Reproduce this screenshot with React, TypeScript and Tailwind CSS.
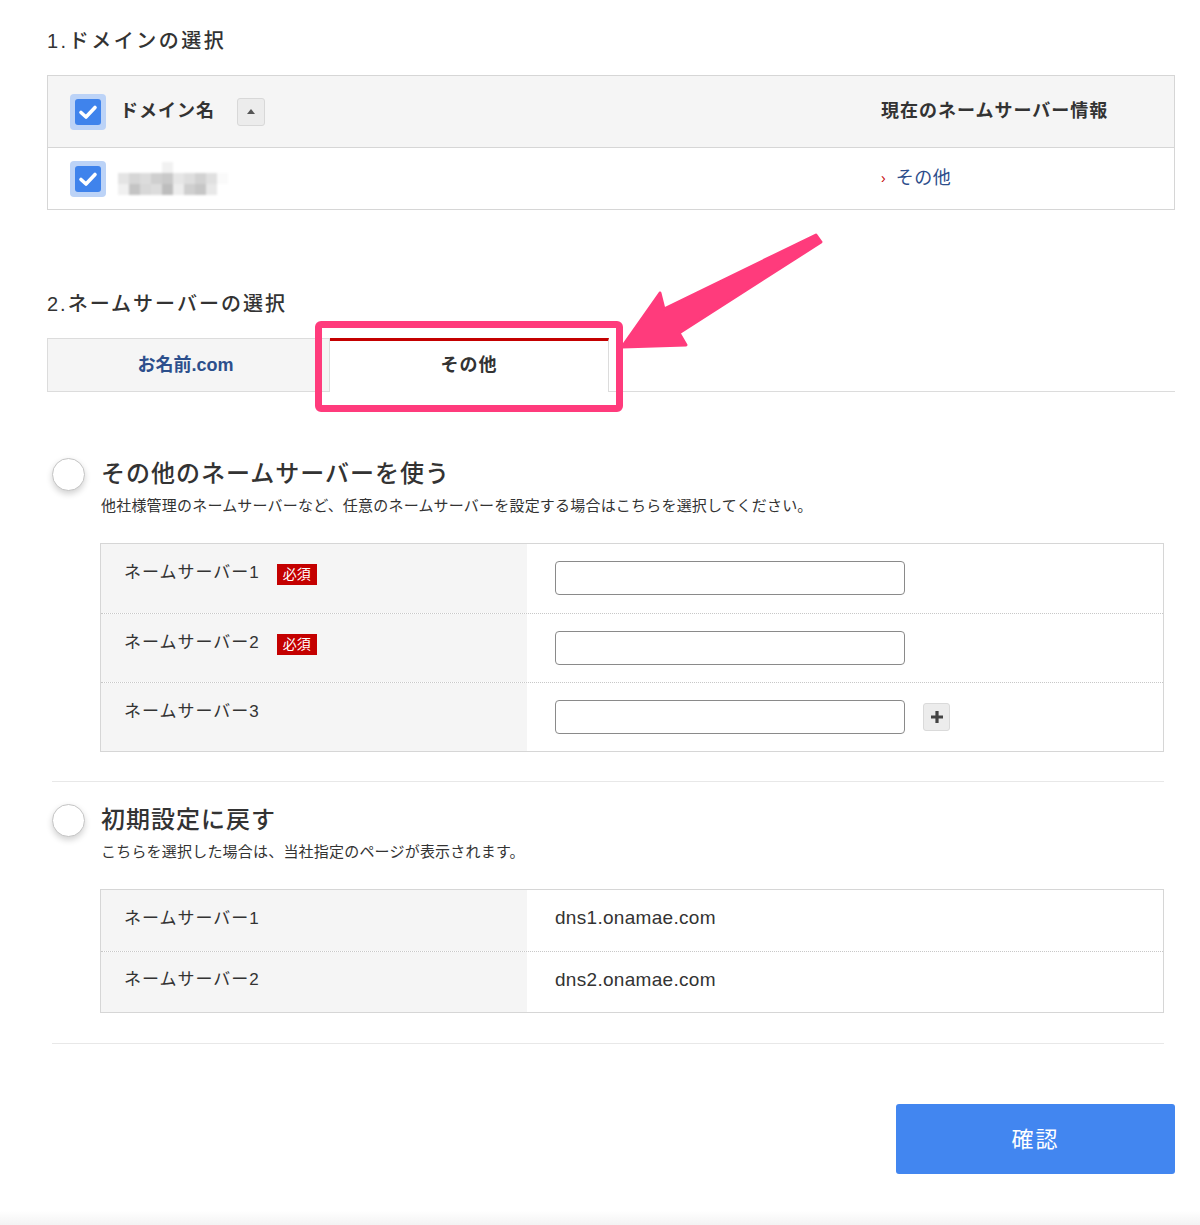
import React from 'react';

const FONT = "font-['Liberation_Sans','Noto_Sans_CJK_JP',sans-serif]";

function CheckBox() {
  return (
    <div className="w-[36px] h-[36px] rounded-[4px] bg-[#bcd3f7] flex items-center justify-center shrink-0">
      <div className="w-[26px] h-[26px] rounded-[3px] bg-[#3f83ec] flex items-center justify-center">
        <svg width="22" height="22" viewBox="0 0 22 22">
          <polyline points="4,11.5 9,16 18,6.5" fill="none" stroke="#fff" strokeWidth="3.6" strokeLinecap="round" strokeLinejoin="round" />
        </svg>
      </div>
    </div>
  );
}

// mosaic that hides the domain name
const mosaic = [
  ['#fff', '#fff', '#fff', '#fff', '#f1f1f1', '#fff', '#fff', '#fff', '#fff', '#fff'],
  ['#e4e4e4', '#d6d6d6', '#dcdcdc', '#cfcfcf', '#c9c9c9', '#e6e6e6', '#dedede', '#d2d2d2', '#e0e0e0', '#fafafa'],
  ['#f0f0f0', '#c4c4c4', '#d8d8d8', '#dcdcdc', '#bdbdbd', '#ededed', '#cfcfcf', '#c6c6c6', '#e8e8e8', '#fff'],
];

function Radio() {
  return <div className="w-[33px] h-[33px] rounded-full border border-[#c4c4c4] bg-white shadow-[0_3px_6px_rgba(0,0,0,0.18)] shrink-0" />;
}

function Required() {
  return <span className="ml-[17px] inline-block bg-[#c40000] text-white text-[14px] leading-[21px] px-[6px] tracking-[0px]">必須</span>;
}

function InputBox() {
  return <div className="w-[350px] h-[34px] rounded-[4px] border border-[#8a8a8a] bg-white" />;
}

export default function App() {
  const formRows = [
    { label: 'ネームサーバー1', required: true },
    { label: 'ネームサーバー2', required: true },
    { label: 'ネームサーバー3', required: false },
  ];

  return (
    <div className={`${FONT} relative w-[1200px] h-[1225px] bg-white text-[#333] overflow-hidden`}>
      <div className="pl-[47px] pr-[25px] pt-[27px]">
        {/* 1. ドメインの選択 */}
        <h2 className="text-[20px] leading-[28px] tracking-[2.5px] font-medium">1.ドメインの選択</h2>
        <div className="mt-[20px] border border-[#d6d6d6]">
          <div className="grid grid-cols-[833px_1fr] h-[72px] bg-[#f5f5f5] border-b border-[#d6d6d6]">
            <div className="flex items-center pl-[22px]">
              <CheckBox />
              <span className="ml-[14px] text-[18px] font-bold tracking-[1px]">ドメイン名</span>
              <div className="ml-[22px] w-[28px] h-[28px] rounded-[3px] bg-[#ececec] border border-[#d8d8d8] flex items-center justify-center">
                <svg width="8" height="5" viewBox="0 0 8 5"><polygon points="4,0 8,5 0,5" fill="#555" /></svg>
              </div>
            </div>
            <div className="flex items-center text-[18px] font-bold tracking-[1px]">現在のネームサーバー情報</div>
          </div>
          <div className="grid grid-cols-[833px_1fr] h-[61px]">
            <div className="flex items-center pl-[22px]">
              <CheckBox />
              <div className="ml-[12px] flex flex-col blur-[1px]">
                {mosaic.map((row, i) => (
                  <div key={i} className="flex">
                    {row.map((c, j) => (
                      <div key={j} className="w-[11px] h-[11px]" style={{ backgroundColor: c }} />
                    ))}
                  </div>
                ))}
              </div>
            </div>
            <div className="flex items-center text-[18px]">
              <span className="text-[#c40000] text-[14px] mr-[10px]">›</span>
              <span className="text-[#2d4d8b] tracking-[0.5px]">その他</span>
            </div>
          </div>
        </div>

        {/* 2. ネームサーバーの選択 */}
        <h2 className="mt-[80px] text-[20px] leading-[28px] tracking-[2px] font-medium">2.ネームサーバーの選択</h2>
        <div className="mt-[20px] flex h-[54px]">
          <div className="w-[283px] bg-[#f5f5f5] border border-[#dcdcdc] flex items-center justify-center pr-[6px] text-[18px] font-bold text-[#2c4f8c]">
            お名前.com
          </div>
          <div className="w-[279px] border-r border-[#dcdcdc] border-t-[3px] border-t-[#c40000] flex items-center justify-center text-[18px] font-bold pb-[3px] tracking-[1px]">
            その他
          </div>
          <div className="flex-1 border-b border-[#dcdcdc]" />
        </div>
      </div>

      <div className="pl-[52px] pr-[36px]">
        {/* その他のネームサーバーを使う */}
        <div className="mt-[66px] flex items-start">
          <Radio />
          <div className="ml-[16px]">
            <div className="text-[24px] leading-[32px] font-medium tracking-[1px]">その他のネームサーバーを使う</div>
            <div className="mt-[6px] text-[15px] leading-[20px] tracking-[0.2px]">他社様管理のネームサーバーなど、任意のネームサーバーを設定する場合はこちらを選択してください。</div>
          </div>
        </div>
        <div className="mt-[27px] ml-[48px] border border-[#d6d6d6]">
          {formRows.map((r, i) => (
            <div key={r.label} className={`grid grid-cols-[426px_1fr] h-[69px] ${i > 0 ? 'border-t border-dotted border-[#c8c8c8]' : ''}`}>
              <div className="bg-[#f5f5f5] pl-[23px] pt-[17px] text-[17px] leading-[24px] tracking-[1px] flex items-start">
                <span>{r.label}</span>
                {r.required && <span className="mt-[1px]"><Required /></span>}
              </div>
              <div className="pl-[28px] pt-[17px] flex items-start">
                <InputBox />
                {i === 2 && (
                  <div className="ml-[18px] mt-[3px] w-[27px] h-[28px] rounded-[3px] bg-[#ececec] border border-[#dadada] flex items-center justify-center">
                    <svg width="16" height="16" viewBox="0 0 16 16"><path d="M8 2v12M2 8h12" stroke="#444" strokeWidth="3.2" /></svg>
                  </div>
                )}
              </div>
            </div>
          ))}
        </div>

        <div className="mt-[29px] h-px bg-[#e8e8e8]" />

        {/* 初期設定に戻す */}
        <div className="mt-[22px] flex items-start">
          <Radio />
          <div className="ml-[16px]">
            <div className="text-[24px] leading-[32px] font-medium tracking-[1px]">初期設定に戻す</div>
            <div className="mt-[6px] text-[15px] leading-[20px] tracking-[0.2px]">こちらを選択した場合は、当社指定のページが表示されます。</div>
          </div>
        </div>
        <div className="mt-[27px] ml-[48px] border border-[#d6d6d6]">
          {['dns1.onamae.com', 'dns2.onamae.com'].map((v, i) => (
            <div key={v} className={`grid grid-cols-[426px_1fr] h-[61px] ${i > 0 ? 'border-t border-dotted border-[#c8c8c8]' : ''}`}>
              <div className="bg-[#f5f5f5] pl-[23px] flex items-center pb-[4px] text-[17px] tracking-[1px]">ネームサーバー{i + 1}</div>
              <div className="pl-[28px] flex items-center pb-[4px] text-[19px] tracking-[0.3px]">{v}</div>
            </div>
          ))}
        </div>

        <div className="mt-[30px] h-px bg-[#e8e8e8]" />
      </div>

      <div className="pr-[25px] mt-[60px] flex justify-end">
        <button className="w-[279px] h-[70px] rounded-[3px] bg-[#4286f0] text-white text-[22px] tracking-[2px]">確認</button>
      </div>

      <div className="absolute left-0 right-0 bottom-0 h-[14px] bg-gradient-to-b from-white to-[#f3f3f3]" />

      {/* annotation: pink frame around the tab */}
      <div className="absolute left-[315px] top-[321px] w-[308px] h-[91px] border-[7px] border-[#ff3b7c] rounded-[6px]" />
      {/* annotation: arrow */}
      <svg className="absolute left-0 top-0 pointer-events-none" width="1200" height="1225" viewBox="0 0 1200 1225">
        <polygon
          points="816,235 664,309 660,293 622,347 686,345 679,333 821,242"
          fill="#ff3b7c"
          stroke="#ff3b7c"
          strokeWidth="3"
          strokeLinejoin="round"
        />
      </svg>
    </div>
  );
}
